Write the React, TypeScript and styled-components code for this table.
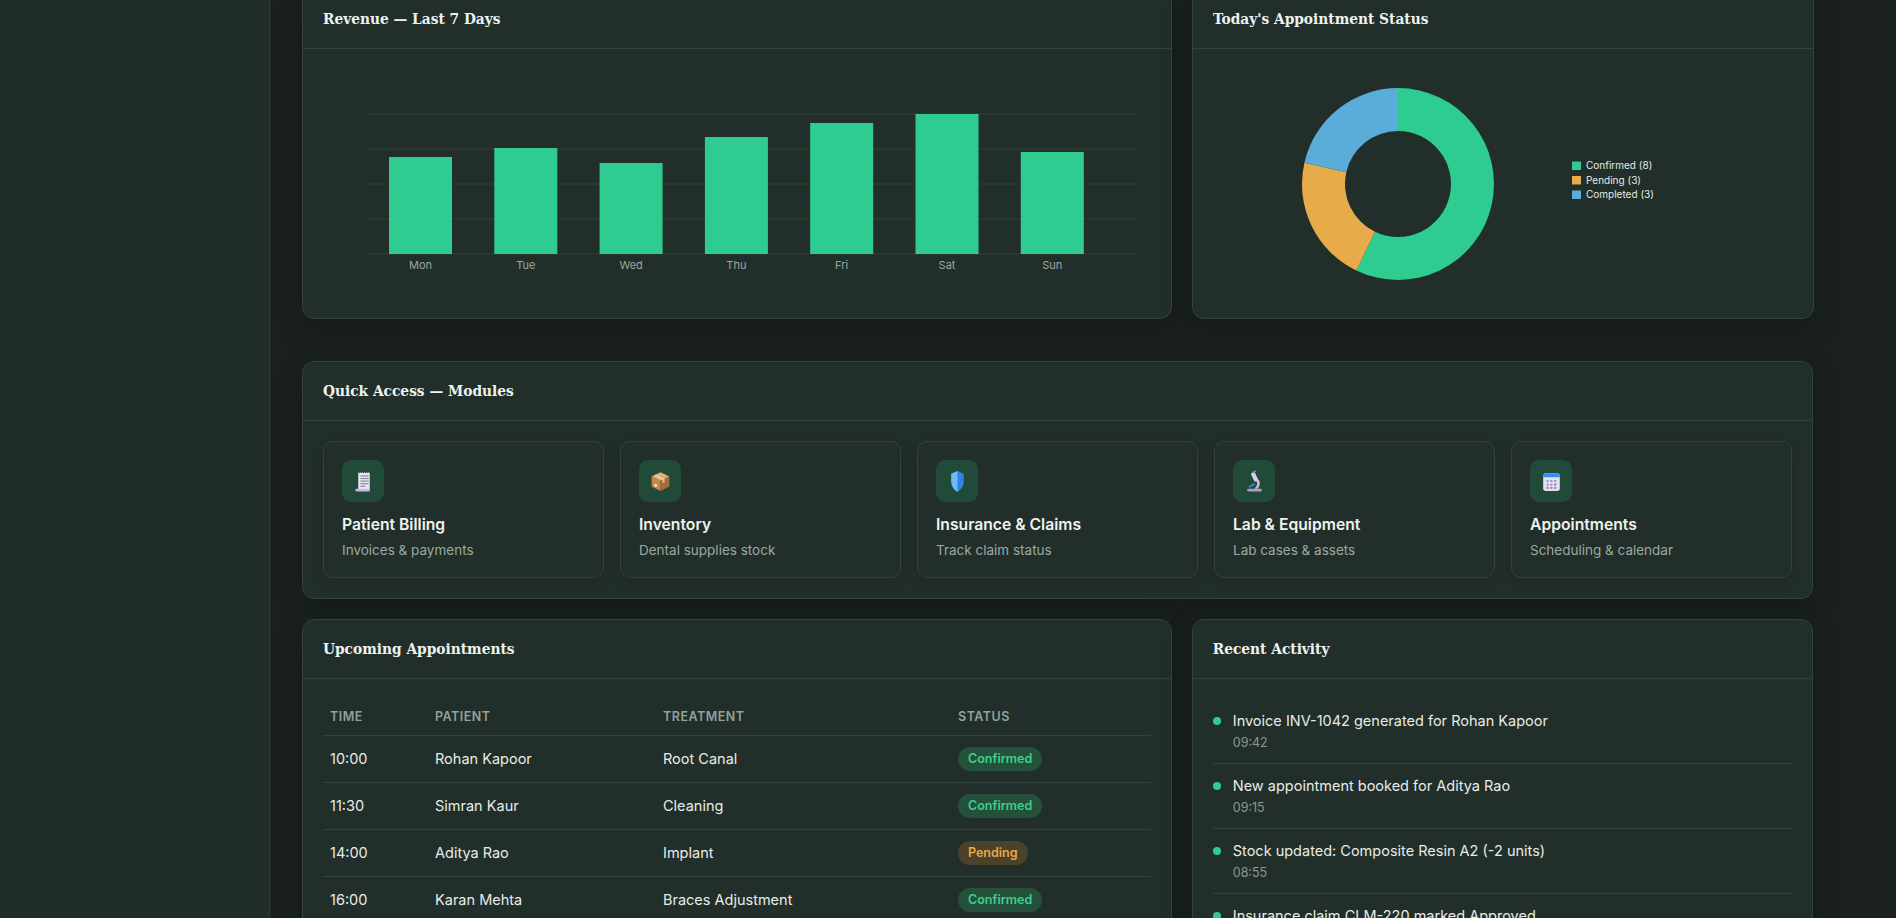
import React from 'react'
import styled, { createGlobalStyle } from 'styled-components'

// colours taken from the reference
const c = {
  page: '#1a211e',
  side: '#212d28',
  card: '#222e29',
  border: '#33423b',
  grid: '#33403a',
  text: '#eef3f0',
  sub: '#9aaaa2',
  head: '#8fa39a',
  green: '#2ecc91',
  orange: '#e8ab4a',
  blue: '#5badd9',
  iconBg: '#224a39',
}

const GlobalStyle = createGlobalStyle`
  html, body {
    margin: 0;
    height: 100%;
    overflow: hidden;
    background: ${c.page};
    font-family: Inter, "Liberation Sans", sans-serif;
    color: ${c.text};
  }
  * { box-sizing: border-box; }
`

// page shell
const Layout = styled.div`
  display: flex;
  height: 918px;
  overflow: hidden;
`

const Sidebar = styled.aside`
  width: 270px;
  flex-shrink: 0;
  background: ${c.side};
  border-right: 1px solid #2f3c36;
`

const Main = styled.main`
  flex: 1;
  padding: 0 32px;
  overflow: hidden;
`

// the page is scrolled a little, so the first row starts above the window
const Content = styled.div`
  max-width: 1511px;
  margin-top: -11px;
  display: flex;
  flex-direction: column;
`

const Row = styled.div<{ $gapBelow?: number }>`
  display: grid;
  grid-template-columns: 1.4fr 1fr;
  gap: 20px;
  margin-bottom: ${({ $gapBelow }) => $gapBelow ?? 20}px;
`

// card
const Card = styled.section<{ $gapBelow?: number }>`
  background: ${c.card};
  border: 1px solid ${c.border};
  border-radius: 12px;
  box-shadow: 0 10px 30px rgba(0, 0, 0, 0.22);
  margin-bottom: ${({ $gapBelow }) => $gapBelow ?? 0}px;
`

const CardHeader = styled.header`
  padding: 18px 20px;
  border-bottom: 1px solid ${c.border};
`

const CardTitle = styled.h3`
  margin: 0;
  font-family: "DejaVu Serif", "Liberation Serif", serif;
  font-stretch: condensed;
  font-weight: 700;
  font-size: 15.3px;
  line-height: 22px;
  color: ${c.text};
`

const CardBody = styled.div`
  padding: 20px;
`

// charts
const ChartSvg = styled.svg`
  display: block;
  font-family: Inter, "Liberation Sans", sans-serif;
`

// quick access
const ModuleGrid = styled.div`
  display: grid;
  grid-template-columns: repeat(5, 1fr);
  gap: 16px;
`

const ModuleCard = styled.div`
  border: 1px solid ${c.border};
  border-radius: 10px;
  padding: 18px;
  background: ${c.card};
  box-shadow: 0 4px 12px rgba(0, 0, 0, 0.12);
`

const IconBox = styled.div`
  width: 42px;
  height: 42px;
  border-radius: 9px;
  background: ${c.iconBg};
  display: flex;
  align-items: center;
  justify-content: center;
`

const ModuleName = styled.div`
  margin-top: 13px;
  font-size: 15.7px;
  line-height: 20px;
  font-weight: 600;
  color: ${c.text};
`

const ModuleDesc = styled.div`
  margin-top: 6px;
  font-size: 13.5px;
  line-height: 18px;
  color: ${c.sub};
`

// table
const Table = styled.table`
  width: 100%;
  border-collapse: collapse;
  font-size: 14.5px;
`

const Th = styled.th<{ $w?: number }>`
  width: ${({ $w }) => ($w ? `${$w}px` : 'auto')};
  text-align: left;
  padding: 11px 7px;
  font-size: 12.5px;
  line-height: 14px;
  font-weight: 600;
  letter-spacing: 0.5px;
  text-transform: uppercase;
  color: ${c.head};
  border-bottom: 1px solid ${c.border};
`

const Td = styled.td`
  height: 47px;
  padding: 0 7px;
  vertical-align: middle;
  line-height: 20px;
  color: #e6ece8;
  border-bottom: 1px solid ${c.border};
`

const Badge = styled.span<{ $tone: 'ok' | 'wait' }>`
  display: inline-flex;
  align-items: center;
  vertical-align: middle;
  padding: 0 10px;
  height: 24px;
  border-radius: 12px;
  font-size: 12.5px;
  font-weight: 600;
  background: ${({ $tone }) => ($tone === 'ok' ? '#25503b' : '#4a4229')};
  color: ${({ $tone }) => ($tone === 'ok' ? '#3dd08c' : '#e9a94a')};
`

// activity
const ActivityList = styled.ul`
  list-style: none;
  margin: 0;
  padding: 0;
`

const ActivityItem = styled.li`
  display: flex;
  gap: 12px;
  padding: 12px 0 11px;
  border-bottom: 1px solid ${c.border};
`

const Dot = styled.span`
  width: 8px;
  height: 8px;
  border-radius: 50%;
  background: ${c.green};
  margin-top: 6px;
  flex-shrink: 0;
`

const ActivityText = styled.div`
  font-size: 14.5px;
  line-height: 20px;
  color: #e6ece8;
`

const ActivityTime = styled.div`
  margin-top: 3px;
  font-size: 12.5px;
  line-height: 18px;
  color: #8a9a92;
`

// data
const revenue = [
  { day: 'Mon', h: 97 },
  { day: 'Tue', h: 106 },
  { day: 'Wed', h: 91 },
  { day: 'Thu', h: 117 },
  { day: 'Fri', h: 131 },
  { day: 'Sat', h: 140 },
  { day: 'Sun', h: 102 },
]

const statusData = [
  { label: 'Confirmed', n: 8, color: c.green },
  { label: 'Pending', n: 3, color: c.orange },
  { label: 'Completed', n: 3, color: c.blue },
]

const appointments = [
  { time: '10:00', patient: 'Rohan Kapoor', treatment: 'Root Canal', status: 'Confirmed' },
  { time: '11:30', patient: 'Simran Kaur', treatment: 'Cleaning', status: 'Confirmed' },
  { time: '14:00', patient: 'Aditya Rao', treatment: 'Implant', status: 'Pending' },
  { time: '16:00', patient: 'Karan Mehta', treatment: 'Braces Adjustment', status: 'Confirmed' },
]

const activity = [
  { text: 'Invoice INV-1042 generated for Rohan Kapoor', time: '09:42' },
  { text: 'New appointment booked for Aditya Rao', time: '09:15' },
  { text: 'Stock updated: Composite Resin A2 (-2 units)', time: '08:55' },
  { text: 'Insurance claim CLM-220 marked Approved', time: '08:30' },
]

// icons (drawn like the emoji in the reference)
const ReceiptIcon = () => (
  <svg width="25" height="25" viewBox="0 0 24 24">
    <path d="M7 3l1 1 1-1 1 1 1-1 1 1 1-1 1 1 1-1 1 1 1-1 1 1v16H7z" fill="#ece8f3" />
    <rect x="9" y="6" width="8" height="1.2" fill="#8e88a6" />
    <rect x="9" y="8.5" width="8" height="1.2" fill="#8e88a6" />
    <rect x="9" y="11" width="8" height="1.2" fill="#8e88a6" />
    <rect x="9" y="13.5" width="8" height="1.2" fill="#8e88a6" />
    <rect x="9" y="16" width="5" height="1.2" fill="#8e88a6" />
    <path d="M4 20.5c0-1 1-1.5 2-1.5h12v2.5H6c-1 0-2-.3-2-1z" fill="#c9b6ea" />
  </svg>
)

const BoxIcon = () => (
  <svg width="25" height="25" viewBox="0 0 24 24">
    <path d="M12 3l8.5 4.2L12 11.5 3.5 7.2z" fill="#e2ad72" />
    <path d="M3.5 7.2L12 11.5V21l-8.5-4.3z" fill="#c6874f" />
    <path d="M20.5 7.2L12 11.5V21l8.5-4.3z" fill="#a86c3c" />
    <path d="M7.5 5.2l8.5 4.3v3l-2 1v-3L5.6 6.2z" fill="#f0cfa2" opacity="0.85" />
    <rect x="6.2" y="14.5" width="2.4" height="2.4" rx="0.4" fill="#efe5da" transform="rotate(25 7.4 15.7)" />
  </svg>
)

const ShieldIcon = () => (
  <svg width="25" height="25" viewBox="0 0 24 24">
    <path d="M12 2l6 2.5v7.5c0 4.5-2.6 8-6 10-3.4-2-6-5.5-6-10V4.5z" fill="#2f84e0" />
    <path d="M12 2v20c-3.4-2-6-5.5-6-10V4.5z" fill="#6dbaf6" />
  </svg>
)

const MicroscopeIcon = () => (
  <svg width="25" height="25" viewBox="0 0 24 24">
    <rect x="5" y="19" width="14" height="2.5" rx="1.2" fill="#a99cc6" />
    <path d="M14 9c3 1 4 4 2.5 7.5L15 19h-3l2-3c1-2 .5-4-1.2-4.8z" fill="#c7bde0" />
    <rect x="10" y="3" width="4" height="9" rx="1.5" transform="rotate(-25 12 7.5)" fill="#d9d2ea" />
    <rect x="10.4" y="1.6" width="3" height="2" rx="0.6" transform="rotate(-25 12 2.6)" fill="#8e82ad" />
    <rect x="6" y="15" width="7" height="1.6" rx="0.8" fill="#3d8fe6" transform="rotate(-30 9.5 15.8)" />
  </svg>
)

const CalendarIcon = () => (
  <svg width="25" height="25" viewBox="0 0 24 24">
    <rect x="4" y="4" width="16" height="17" rx="2.5" fill="#e6ddf3" />
    <path d="M4 6.5A2.5 2.5 0 0 1 6.5 4h11A2.5 2.5 0 0 1 20 6.5V8H4z" fill="#3b8ee8" />
    {[0, 1, 2].map((r) =>
      [0, 1, 2].map((k) => (
        <rect
          key={`${r}-${k}`}
          x={7.3 + k * 3.6}
          y={10.5 + r * 3.3}
          width="2"
          height="2"
          rx="0.3"
          fill={r === 1 && k === 2 ? '#3b8ee8' : '#9b8fbb'}
        />
      )),
    )}
  </svg>
)

const modules = [
  { name: 'Patient Billing', desc: 'Invoices & payments', icon: <ReceiptIcon /> },
  { name: 'Inventory', desc: 'Dental supplies stock', icon: <BoxIcon /> },
  { name: 'Insurance & Claims', desc: 'Track claim status', icon: <ShieldIcon /> },
  { name: 'Lab & Equipment', desc: 'Lab cases & assets', icon: <MicroscopeIcon /> },
  { name: 'Appointments', desc: 'Scheduling & calendar', icon: <CalendarIcon /> },
]

// bar chart
const RevenueChart = () => {
  const base = 185
  const gridTop = 45
  return (
    <ChartSvg width="828" height="229">
      {[0, 1, 2, 3, 4].map((i) => (
        <line
          key={i}
          x1="44"
          x2="815"
          y1={gridTop + i * 35}
          y2={gridTop + i * 35}
          stroke={c.grid}
          strokeWidth="1"
        />
      ))}
      {revenue.map((b, i) => {
        const x = 66 + i * 105.3
        return (
          <g key={b.day}>
            <rect x={x} y={base - b.h} width="63" height={b.h} fill={c.green} />
            <text x={x + 31.5} y="200" textAnchor="middle" fontSize="11" fill="#9aa7a1">
              {b.day}
            </text>
          </g>
        )
      })}
    </ChartSvg>
  )
}

// donut chart
const pt = (cx: number, cy: number, r: number, deg: number) => {
  const a = (deg * Math.PI) / 180
  return [cx + r * Math.sin(a), cy - r * Math.cos(a)]
}

const arcPath = (cx: number, cy: number, r: number, R: number, a0: number, a1: number) => {
  const large = a1 - a0 > 180 ? 1 : 0
  const [x0, y0] = pt(cx, cy, R, a0)
  const [x1, y1] = pt(cx, cy, R, a1)
  const [x2, y2] = pt(cx, cy, r, a1)
  const [x3, y3] = pt(cx, cy, r, a0)
  return `M${x0} ${y0}A${R} ${R} 0 ${large} 1 ${x1} ${y1}L${x2} ${y2}A${r} ${r} 0 ${large} 0 ${x3} ${y3}Z`
}

const StatusChart = () => {
  const total = statusData.reduce((s, d) => s + d.n, 0)
  let start = 0
  return (
    <ChartSvg width="580" height="229">
      {statusData.map((d) => {
        const end = start + (d.n / total) * 360
        const p = arcPath(185, 115, 53, 96, start, end)
        start = end
        return <path key={d.label} d={p} fill={d.color} />
      })}
      {statusData.map((d, i) => (
        <g key={d.label}>
          <rect x="359" y={92.5 + i * 14.5} width="9" height="8.5" fill={d.color} />
          <text x="373" y={100.3 + i * 14.5} fontSize="10" fill="#e4ebe7">
            {d.label} ({d.n})
          </text>
        </g>
      ))}
    </ChartSvg>
  )
}

export default function App() {
  return (
    <>
      <GlobalStyle />
      <Layout>
        <Sidebar />
        <Main>
          <Content>
            <Row $gapBelow={42}>
              <Card>
                <CardHeader>
                  <CardTitle>Revenue — Last 7 Days</CardTitle>
                </CardHeader>
                <CardBody>
                  <RevenueChart />
                </CardBody>
              </Card>
              <Card>
                <CardHeader>
                  <CardTitle>Today's Appointment Status</CardTitle>
                </CardHeader>
                <CardBody>
                  <StatusChart />
                </CardBody>
              </Card>
            </Row>

            <Card $gapBelow={20}>
              <CardHeader>
                <CardTitle>Quick Access — Modules</CardTitle>
              </CardHeader>
              <CardBody>
                <ModuleGrid>
                  {modules.map((m) => (
                    <ModuleCard key={m.name}>
                      <IconBox>{m.icon}</IconBox>
                      <ModuleName>{m.name}</ModuleName>
                      <ModuleDesc>{m.desc}</ModuleDesc>
                    </ModuleCard>
                  ))}
                </ModuleGrid>
              </CardBody>
            </Card>

            <Row>
              <Card>
                <CardHeader>
                  <CardTitle>Upcoming Appointments</CardTitle>
                </CardHeader>
                <CardBody>
                  <Table>
                    <thead>
                      <tr>
                        <Th $w={105}>Time</Th>
                        <Th $w={228}>Patient</Th>
                        <Th $w={295}>Treatment</Th>
                        <Th>Status</Th>
                      </tr>
                    </thead>
                    <tbody>
                      {appointments.map((a) => (
                        <tr key={a.time}>
                          <Td>{a.time}</Td>
                          <Td>{a.patient}</Td>
                          <Td>{a.treatment}</Td>
                          <Td>
                            <Badge $tone={a.status === 'Pending' ? 'wait' : 'ok'}>{a.status}</Badge>
                          </Td>
                        </tr>
                      ))}
                    </tbody>
                  </Table>
                </CardBody>
              </Card>
              <Card>
                <CardHeader>
                  <CardTitle>Recent Activity</CardTitle>
                </CardHeader>
                <CardBody>
                  <ActivityList>
                    {activity.map((a) => (
                      <ActivityItem key={a.time}>
                        <Dot />
                        <div>
                          <ActivityText>{a.text}</ActivityText>
                          <ActivityTime>{a.time}</ActivityTime>
                        </div>
                      </ActivityItem>
                    ))}
                  </ActivityList>
                </CardBody>
              </Card>
            </Row>
          </Content>
        </Main>
      </Layout>
    </>
  )
}
